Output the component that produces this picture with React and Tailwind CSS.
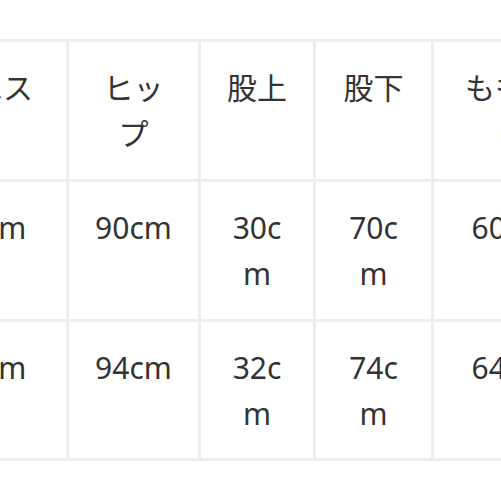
import React from "react";

const header = ["ウエスト", "ヒップ", "股上", "股下", "もも周り"];
const rows = [
  ["72cm", "90cm", "30cm", "70cm", "60cm"],
  ["76cm", "94cm", "32cm", "74cm", "64cm"],
];

function Cell({ children, last }) {
  return (
    <div
      className={
        last
          ? "bg-white px-[23px] pt-[23px] pb-[21px] text-center break-all text-[30px] leading-[46px] text-[#333333]"
          : "bg-white px-[23px] pt-[23px] pb-[22px] text-center break-all text-[30px] leading-[46px] text-[#333333]"
      }
    >
      {children}
    </div>
  );
}

export default function App() {
  return (
    <div
      className="w-[501px] h-[501px] overflow-hidden bg-white"
      style={{ fontFamily: '"Noto Sans", "Noto Sans CJK JP", sans-serif' }}
    >
      <div className="mt-[39px] ml-[-93px] w-max grid grid-cols-[156px_129px_112px_115px_152px] gap-[3px] p-[3px] bg-[#ededed]">
        {header.map((h, i) => (
          <Cell key={"h" + i}>{h}</Cell>
        ))}
        {rows.map((r, ri) =>
          r.map((c, ci) => (
            <Cell key={ri + "-" + ci} last={ri === rows.length - 1}>
              {c}
            </Cell>
          ))
        )}
      </div>
    </div>
  );
}
